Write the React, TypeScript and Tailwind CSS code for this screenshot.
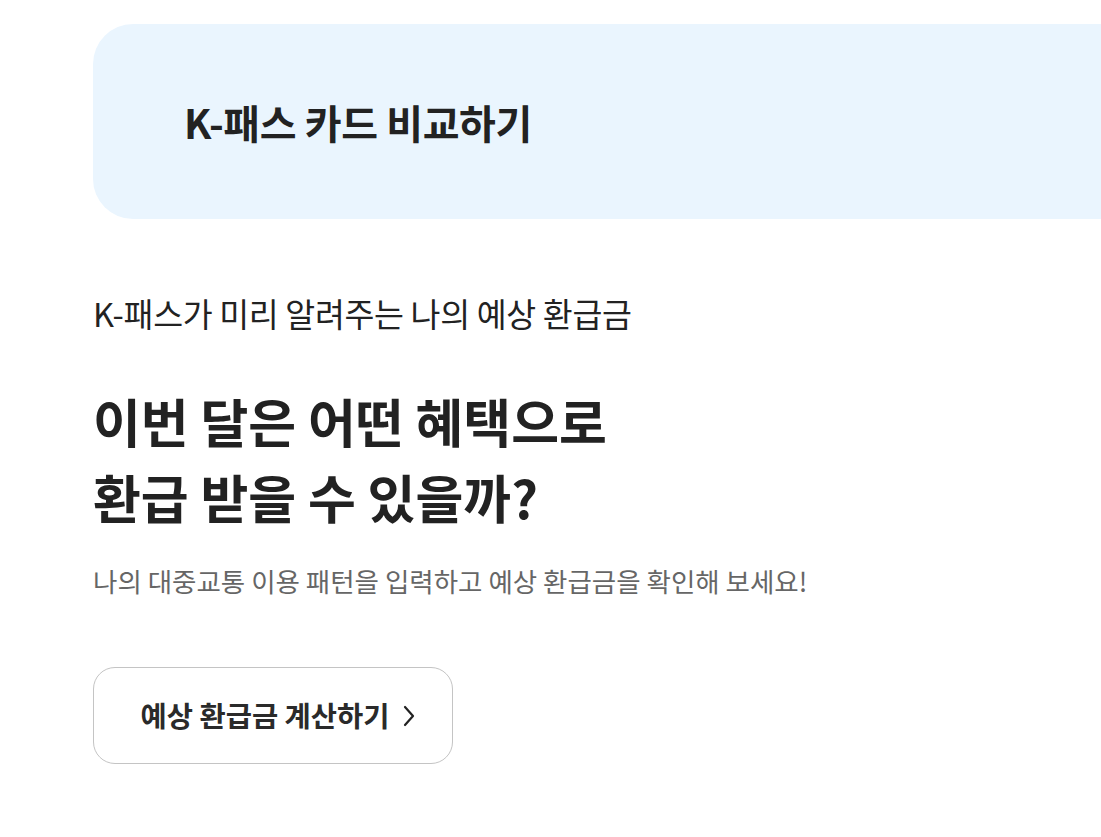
const font = { fontFamily: '"Noto Sans CJK KR", "Noto Sans", sans-serif' };

export default function App() {
  return (
    <div className="min-h-screen bg-white text-[#222]" style={font}>
      <div className="pt-6 pl-[93px]">
        <header className="flex h-[195px] items-center rounded-l-[40px] bg-[#eaf5fe] pl-[91px]">
          <h1 className="text-[40px] font-bold tracking-[-0.01em]">K-패스 카드 비교하기</h1>
        </header>

        <section className="pt-[72px]">
          <p className="text-[32.5px] leading-[44px] tracking-[-0.01em]">K-패스가 미리 알려주는 나의 예상 환급금</p>
          <h2 className="mt-[48px] text-[52px] font-bold leading-[76px]">
            이번 달은 어떤 혜택으로
            <br />
            환급 받을 수 있을까?
          </h2>
          <p className="mt-[28px] text-[26.5px] leading-[36px] text-[#666]">
            나의 대중교통 이용 패턴을 입력하고 예상 환급금을 확인해 보세요!
          </p>
          <button className="mt-[68px] flex h-[97px] w-[360px] items-center justify-center gap-[14px] rounded-[22px] border border-[#c4c4c4] bg-white pl-[10px] text-[28.5px] font-bold text-[#2a2a2a]">
            예상 환급금 계산하기
            <svg width="12" height="22" viewBox="0 0 12 22" fill="none" stroke="#222" strokeWidth="2.2" strokeLinecap="round" strokeLinejoin="round">
              <polyline points="2,2 10,11 2,20" />
            </svg>
          </button>
        </section>
      </div>
    </div>
  );
}
